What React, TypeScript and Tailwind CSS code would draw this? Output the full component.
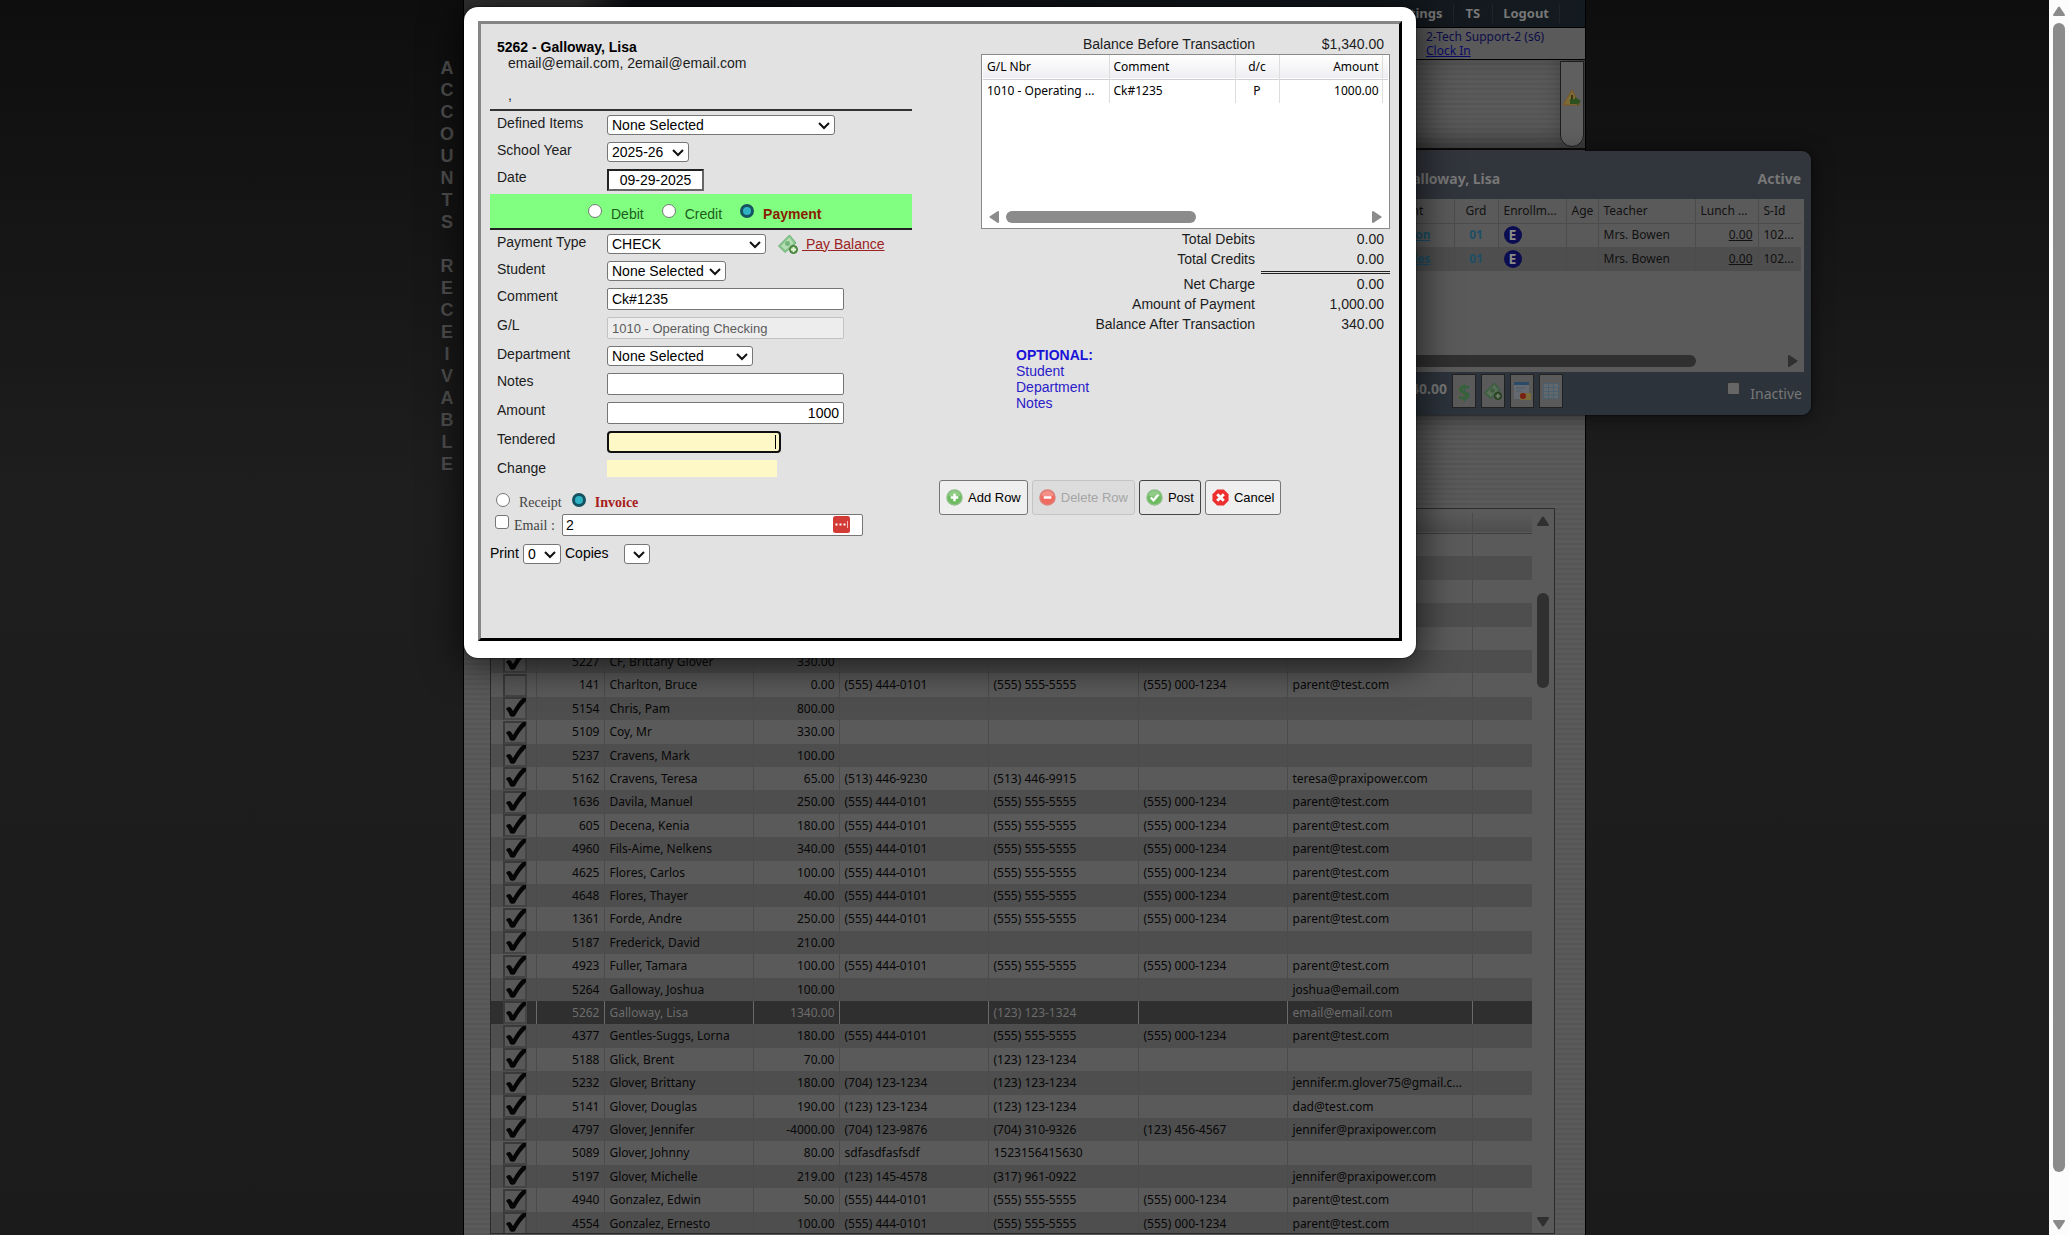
import React from 'react'
import clsx from 'clsx'

type Account = [id: string, name: string, balance: string, home: string, work: string, cell: string, email: string]

const HOME = '(555) 444-0101'
const WORK = '(555) 555-5555'
const CELL = '(555) 000-1234'
const MAIL = 'parent@test.com'

const accounts: Account[] = [
  ['5227', 'CF, Brittany Glover', '330.00', '', '', '', ''],
  ['141', 'Charlton, Bruce', '0.00', HOME, WORK, CELL, MAIL],
  ['5154', 'Chris, Pam', '800.00', '', '', '', ''],
  ['5109', 'Coy, Mr', '330.00', '', '', '', ''],
  ['5237', 'Cravens, Mark', '100.00', '', '', '', ''],
  ['5162', 'Cravens, Teresa', '65.00', '(513) 446-9230', '(513) 446-9915', '', 'teresa@praxipower.com'],
  ['1636', 'Davila, Manuel', '250.00', HOME, WORK, CELL, MAIL],
  ['605', 'Decena, Kenia', '180.00', HOME, WORK, CELL, MAIL],
  ['4960', 'Fils-Aime, Nelkens', '340.00', HOME, WORK, CELL, MAIL],
  ['4625', 'Flores, Carlos', '100.00', HOME, WORK, CELL, MAIL],
  ['4648', 'Flores, Thayer', '40.00', HOME, WORK, CELL, MAIL],
  ['1361', 'Forde, Andre', '250.00', HOME, WORK, CELL, MAIL],
  ['5187', 'Frederick, David', '210.00', '', '', '', ''],
  ['4923', 'Fuller, Tamara', '100.00', HOME, WORK, CELL, MAIL],
  ['5264', 'Galloway, Joshua', '100.00', '', '', '', 'joshua@email.com'],
  ['5262', 'Galloway, Lisa', '1340.00', '', '(123) 123-1324', '', 'email@email.com'],
  ['4377', 'Gentles-Suggs, Lorna', '180.00', HOME, WORK, CELL, MAIL],
  ['5188', 'Glick, Brent', '70.00', '', '(123) 123-1234', '', ''],
  ['5232', 'Glover, Brittany', '180.00', '(704) 123-1234', '(123) 123-1234', '', 'jennifer.m.glover75@gmail.c...'],
  ['5141', 'Glover, Douglas', '190.00', '(123) 123-1234', '(123) 123-1234', '', 'dad@test.com'],
  ['4797', 'Glover, Jennifer', '-4000.00', '(704) 123-9876', '(704) 310-9326', '(123) 456-4567', 'jennifer@praxipower.com'],
  ['5089', 'Glover, Johnny', '80.00', 'sdfasdfasfsdf', '1523156415630', '', ''],
  ['5197', 'Glover, Michelle', '219.00', '(123) 145-4578', '(317) 961-0922', '', 'jennifer@praxipower.com'],
  ['4940', 'Gonzalez, Edwin', '50.00', HOME, WORK, CELL, MAIL],
  ['4554', 'Gonzalez, Ernesto', '100.00', HOME, WORK, CELL, MAIL],
]

// rows scrolled under the dialog, only their stripes are visible
const blankRows: Account[] = Array.from({ length: 5 }, () => ['', '', '', '', '', '', ''])

const SELECTED_ID = '5262'

function Triangle({ className }: { className?: string }) {
  return (
    <svg viewBox="0 0 12 10" className={clsx('h-[10px] w-3', className)} fill="currentColor" stroke="currentColor" strokeWidth="2" strokeLinejoin="round">
      <path d="M6 1.5 11 9H1Z" />
    </svg>
  )
}

function MoneyIcon({ className }: { className?: string }) {
  return (
    <svg viewBox="0 0 20 20" className={className}>
      <path d="M.500 12 11.500 1 18 9 7 18.500Z" fill="#86c78c" stroke="#6fae76" />
      <path d="M3 12 11.500 3.500 15.500 9 7.500 16Z" fill="#b5deb4" />
      <circle cx="9.500" cy="9.500" r="2.500" fill="#74b67b" />
      <circle cx="15.500" cy="15.500" r="4" fill="#5c9a4e" stroke="#3f7536" />
      <path d="M15.500 13v5M13 15.500h5" stroke="#e9f7dc" strokeWidth="1.800" />
    </svg>
  )
}

function RoundIcon({ kind }: { kind: 'add' | 'delete' | 'post' | 'cancel' }) {
  if (kind === 'cancel') {
    return (
      <svg viewBox="0 0 18 18" className="size-[17px]">
        <path d="M5.500.5h7l5 5v7l-5 5h-7l-5-5v-7Z" fill="#ee2f2f" />
        <path d="m5.500 5.500 7 7m0-7-7 7" stroke="#fff" strokeWidth="3" />
      </svg>
    )
  }
  return (
    <svg viewBox="0 0 18 18" className="size-[17px]">
      <circle cx="9" cy="9" r="8" fill={kind === 'delete' ? '#ef6b60' : '#6cbb5f'} stroke={kind === 'delete' ? '#dd8078' : '#8fbf88'} strokeWidth="1.500" />
      <path d="M2.500 7a6.800 6.800 0 0 1 13 0c-4 2-9 2-13 0Z" fill="#fff" opacity=".25" />
      {kind === 'add' && <path d="M9 5v8M5 9h8" stroke="#fff" strokeWidth="2.600" />}
      {kind === 'delete' && <path d="M5 9h8" stroke="#fff" strokeWidth="2.600" />}
      {kind === 'post' && <path d="m5 9 3 3 5-6" stroke="#fff" strokeWidth="2.400" fill="none" />}
    </svg>
  )
}

/* ---------- form controls ---------- */

function SelectBox({ id, value, className, label }: { id: string; value: string; className: string; label?: string }) {
  return (
    <span className={clsx('relative block h-5', className)}>
      <select
        id={id}
        aria-label={label}
        defaultValue={value}
        className="block h-5 w-full appearance-none rounded-[3px] border border-[#767676] bg-white pl-1 text-[14px] leading-[18px] text-black"
      >
        <option value={value}>{value}</option>
      </select>
      <svg viewBox="0 0 12 8" className="pointer-events-none absolute top-[7px] right-[5px] h-2 w-3" fill="none" stroke="#111" strokeWidth="2">
        <path d="m1 1 5 5 5-5" />
      </svg>
    </span>
  )
}

function Field({ label, htmlFor, children }: { label: string; htmlFor: string; children: React.ReactNode }) {
  return (
    <div className="flex items-start pl-[7px]">
      <label htmlFor={htmlFor} className="w-[110px] shrink-0 leading-4">
        {label}
      </label>
      {children}
    </div>
  )
}

const inputClass = 'block h-[22px] w-[237px] rounded-[2px] border border-[#767676] bg-white px-1 text-[14px] text-black'
const radioClass =
  'size-[14px] shrink-0 appearance-none rounded-full border border-[#767676] bg-white checked:border-[3px] checked:border-[#14535f] checked:bg-[#2fb3c4]'

function Radio({ name, label, checked, className }: { name: string; label: string; checked?: boolean; className?: string }) {
  return (
    <label className="flex items-center gap-[9px]">
      <input type="radio" name={name} defaultChecked={checked} className={radioClass} />
      <span className={clsx('pt-[6px] leading-4', className)}>{label}</span>
    </label>
  )
}

function EntryForm() {
  return (
    <form className="w-[422px] shrink-0">
      <div className="h-[87px] border-b-2 border-[#333] pt-[15px] leading-4">
        <h2 className="pl-[7px] font-bold text-black">5262 - Galloway, Lisa</h2>
        <p className="pl-[18px]">email@email.com, 2email@email.com</p>
        <p className="pt-4 pl-[18px]">,</p>
      </div>

      <div className="flex flex-col gap-[7px] pt-1">
        <Field label="Defined Items" htmlFor="defined">
          <SelectBox id="defined" value="None Selected" className="w-[228px]" />
        </Field>
        <Field label="School Year" htmlFor="year">
          <SelectBox id="year" value="2025-26" className="w-[82px]" />
        </Field>
        <Field label="Date" htmlFor="date">
          <input id="date" defaultValue="09-29-2025" className="block h-[22px] w-[97px] border-2 border-t-[#222] border-r-[#666] border-b-[#666] border-l-[#222] bg-white text-center text-[14px] text-black" />
        </Field>
      </div>

      <fieldset className="mt-[3px] flex h-9 items-center gap-[18px] border-b-2 border-[#222] bg-[#80ff80] pl-[98px]">
        <Radio name="kind" label="Debit" className="text-[#1d5c1d]" />
        <Radio name="kind" label="Credit" className="text-[#1d5c1d]" />
        <Radio name="kind" label="Payment" checked className="font-bold text-[#8b1c00]" />
      </fieldset>

      <div className="flex flex-col gap-[7px] pt-1">
        <Field label="Payment Type" htmlFor="ptype">
          <SelectBox id="ptype" value="CHECK" className="w-[159px]" />
          <a href="#pay" className="ml-3 flex h-5 items-center gap-1 text-[#9b2222]">
            <MoneyIcon className="size-5" />
            <span className="whitespace-pre underline"> Pay Balance</span>
          </a>
        </Field>
        <Field label="Student" htmlFor="student">
          <SelectBox id="student" value="None Selected" className="w-[119px]" />
        </Field>
        <Field label="Comment" htmlFor="comment">
          <input id="comment" defaultValue="Ck#1235" className={inputClass} />
        </Field>
        <Field label="G/L" htmlFor="gl">
          <input id="gl" disabled defaultValue="1010 - Operating Checking" className="block h-[22px] w-[237px] rounded-[2px] border border-[#c2c2c2] bg-[#ededed] px-1 text-[13px] text-[#5c5c5c]" />
        </Field>
        <Field label="Department" htmlFor="dept">
          <SelectBox id="dept" value="None Selected" className="w-[146px]" />
        </Field>
        <Field label="Notes" htmlFor="notes">
          <input id="notes" className={inputClass} />
        </Field>
        <Field label="Amount" htmlFor="amount">
          <input id="amount" defaultValue="1000" className={clsx(inputClass, 'text-right')} />
        </Field>
        <Field label="Tendered" htmlFor="tendered">
          <span className="relative block">
            <input id="tendered" className="block h-[22px] w-[174px] rounded-[4px] border-2 border-[#101010] bg-[#fdf8c6]" />
            <span className="absolute top-1 right-[5px] h-[14px] w-px bg-black" />
          </span>
        </Field>
        <Field label="Change" htmlFor="change">
          <output id="change" className="block h-[17px] w-[170px] bg-[#fdf8c6]" />
        </Field>
      </div>

      <fieldset className="flex h-[37px] items-center gap-[10px] pt-2 pl-[6px] font-['Liberation_Serif',serif]">
        <Radio name="doc" label="Receipt" className="text-[#444]" />
        <Radio name="doc" label="Invoice" checked className="font-bold text-[#a81c1c]" />
      </fieldset>

      <div className="flex h-[22px] items-center pl-[5px]">
        <label className="flex w-[67px] items-center gap-[5px] font-['Liberation_Serif',serif] text-[#444]">
          <input type="checkbox" className="mb-[6px] size-[14px] shrink-0 appearance-none rounded-[3px] border border-[#767676] bg-white" />
          Email :
        </label>
        <span className="relative block">
          <input aria-label="Email address" defaultValue="2" className="block h-[22px] w-[301px] rounded-[2px] border border-[#767676] bg-white px-[3px] text-[14px] text-black" />
          <svg viewBox="0 0 17 17" className="absolute top-[2px] right-[13px] size-[17px]">
            <rect width="17" height="17" rx="2.500" fill="#d33c36" />
            <path d="M2.500 8.500h2M6.500 8.500h2M10.500 8.500h2" stroke="#fff" strokeWidth="2" />
            <path d="M14.500 5v7" stroke="#f3b9b6" />
          </svg>
        </span>
      </div>

      <div className="mt-[7px] flex items-center text-black">
        <label htmlFor="copies" className="w-[33px]">Print</label>
        <SelectBox id="copies" value="0" className="w-[38px]" />
        <span className="w-[63px] pl-1">Copies</span>
        <SelectBox id="printer" value=" " label="Printer" className="w-[26px]" />
      </div>
    </form>
  )
}

function TotalRow({ label, value, rule }: { label: string; value: string; rule?: boolean }) {
  return (
    <div className={clsx('flex justify-end', rule ? 'h-[25px]' : 'h-5')}>
      <span className="flex-1 pr-[6px] text-right leading-5">{label}</span>
      <span className={clsx('w-[129px] pr-[6px] text-right leading-5', rule && 'border-b-[3px] border-double border-[#222]')}>{value}</span>
    </div>
  )
}

function ActionButton({ kind, label, disabled, primary }: { kind: 'add' | 'delete' | 'post' | 'cancel'; label: string; disabled?: boolean; primary?: boolean }) {
  return (
    <button
      type="button"
      disabled={disabled}
      className={clsx(
        'flex h-[35px] items-center gap-[5px] rounded-[3px] border px-[6px] text-[13px]',
        disabled ? 'border-[#c4c4c4] bg-[#dcdcdc] text-[#a5a5a5]' : primary ? 'border-[#444] bg-[#e5e5e5] text-black' : 'border-[#767676] bg-[#efefef] text-black',
      )}
    >
      <RoundIcon kind={kind} />
      {label}
    </button>
  )
}

function Summary() {
  return (
    <section className="flex-1 pt-[10px]">
      <div className="pl-[42px]">
        <TotalRow label="Balance Before Transaction" value="$1,340.00" />
        <div className="flex h-[175px] flex-col justify-between border border-[#8a8a8a] bg-white px-px font-['Noto_Sans',sans-serif] text-[12px] text-black">
          <table className="w-full table-fixed">
            <colgroup>
              <col className="w-[126px]" />
              <col className="w-[126px]" />
              <col className="w-[44px]" />
              <col className="w-[103px]" />
              <col />
            </colgroup>
            <thead>
              <tr className="h-6 border-b border-[#cfcfd4] bg-linear-to-b from-white to-[#eeeef2]">
                <th className="border-r border-[#ddd] px-1 text-left font-normal">G/L Nbr</th>
                <th className="border-r border-[#ddd] px-1 text-left font-normal">Comment</th>
                <th className="border-r border-[#ddd] font-normal">d/c</th>
                <th className="border-r border-[#ddd] px-[3px] text-right font-normal">Amount</th>
                <th />
              </tr>
            </thead>
            <tbody>
              <tr className="h-6">
                <td className="border-r border-[#ddd] px-1">1010 - Operating ...</td>
                <td className="border-r border-[#ddd] px-1">Ck#1235</td>
                <td className="border-r border-[#ddd] text-center">P</td>
                <td className="border-r border-[#ddd] px-[3px] text-right">1000.00</td>
                <td />
              </tr>
            </tbody>
          </table>
          <div className="flex h-[22px] items-center gap-[6px] px-[5px] text-[#8b8b8b]">
            <Triangle className="-rotate-90" />
            <div className="flex-1">
              <div className="h-3 w-[53%] rounded-full bg-[#8b8b8b]" />
            </div>
            <Triangle className="rotate-90" />
          </div>
        </div>
        <TotalRow label="Total Debits" value="0.00" />
        <TotalRow label="Total Credits" value="0.00" rule />
        <TotalRow label="Net Charge" value="0.00" />
        <TotalRow label="Amount of Payment" value="1,000.00" />
        <TotalRow label="Balance After Transaction" value="340.00" />
      </div>

      <div className="mt-[13px] pl-[77px] leading-4 text-[#2a20c8]">
        <p className="font-bold text-[#1a12d8]">OPTIONAL:</p>
        <p>Student</p>
        <p>Department</p>
        <p>Notes</p>
      </div>

      <div className="mt-[69px] flex gap-1">
        <ActionButton kind="add" label="Add Row" />
        <ActionButton kind="delete" label="Delete Row" disabled />
        <ActionButton kind="post" label="Post" primary />
        <ActionButton kind="cancel" label="Cancel" />
      </div>
    </section>
  )
}

function TransactionDialog() {
  return (
    <div
      role="dialog"
      aria-label="Transaction"
      className="absolute top-[7px] left-px z-20 w-[952px] rounded-[14px] bg-white px-[14px] pt-[14px] pb-[17px] shadow-[0_0_2px_#000,0_4px_36px_6px_rgba(0,0,0,0.6)]"
    >
      <div className="flex gap-[27px] border-[3px] border-t-[#858585] border-r-black border-b-black border-l-[#858585] bg-[#e2e2e2] pr-[9px] pb-[74px] pl-[9px] font-['Liberation_Sans',Arial,sans-serif] text-[14px] text-[#1c1c1c]">
        <EntryForm />
        <Summary />
      </div>
    </div>
  )
}

/* ---------- family card, hangs off the right edge of the page ---------- */

const students = ['Jason', 'Myles']

function FamilyCard() {
  const cell = 'border-r border-[#4c4c4c] px-[5px]'
  return (
    <section className="absolute top-[151px] left-[904px] z-10 w-[444px] rounded-[9px] bg-linear-to-b from-[#32353c] to-[#2c333b] px-[7px] shadow-[0_0_2px_#000,0_2px_20px_rgba(0,0,0,0.5)]">
      <header className="flex h-12 items-center justify-between pt-[6px] pr-[3px] pl-7 text-[14px] font-bold text-[#777]">
        <span>Galloway, Lisa</span>
        <span>Active</span>
      </header>
      <div className="flex h-[173px] flex-col justify-between bg-[#5a5a5a] pr-[3px] text-[#111]">
        <table className="w-full table-fixed text-[12px]">
          <colgroup>
            <col className="w-[80px]" />
            <col className="w-[44px]" />
            <col className="w-[68px]" />
            <col className="w-[32px]" />
            <col className="w-[97px]" />
            <col className="w-[63px]" />
            <col />
          </colgroup>
          <thead>
            <tr className="h-6 border-b border-[#4c4c4c] text-left">
              <th className={clsx(cell, 'font-normal')}>Student</th>
              <th className={clsx(cell, 'text-center font-normal')}>Grd</th>
              <th className={clsx(cell, 'font-normal')}>Enrollm...</th>
              <th className={clsx(cell, 'font-normal')}>Age</th>
              <th className={clsx(cell, 'font-normal')}>Teacher</th>
              <th className={clsx(cell, 'font-normal')}>Lunch ...</th>
              <th className="px-[5px] font-normal">S-Id</th>
            </tr>
          </thead>
          <tbody>
            {students.map((name) => (
              <tr key={name} className="h-6 even:bg-[#4e4e4e]">
                <td className="border-r border-[#4c4c4c] pr-[23px] text-right">
                  <a href="#student" className="font-bold text-[#1b4f66] underline">{name}</a>
                </td>
                <td className={clsx(cell, 'text-center font-bold text-[#1b4f66]')}>01</td>
                <td className={cell}>
                  <span className="grid size-[18px] place-items-center rounded-full bg-[#0c0c50] text-[14px] leading-none font-bold text-[#8a8a8a]">E</span>
                </td>
                <td className={cell} />
                <td className={cell}>Mrs. Bowen</td>
                <td className={clsx(cell, 'text-right underline')}>0.00</td>
                <td className="px-[5px]">102...</td>
              </tr>
            ))}
          </tbody>
        </table>
        <div className="flex h-[22px] items-center pr-[2px] text-[#303030]">
          <div className="flex-1">
            <div className="h-3 w-[78%] rounded-full bg-[#303030]" />
          </div>
          <Triangle className="rotate-90" />
        </div>
      </div>
      <footer className="flex h-[43px] items-start gap-[5px] pt-[2px] text-[#777]">
        <span className="w-[73px] pt-1 text-right text-[14px] font-bold">340.00</span>
        <button type="button" aria-label="Charge" className="grid h-[34px] w-[24px] place-items-center border border-[#222] bg-[#5a5a5a] text-[22px] leading-none font-bold text-[#36633b]">$</button>
        <button type="button" aria-label="Payment" className="grid h-[34px] w-[24px] place-items-center border border-[#222] bg-[#5a5a5a]">
          <MoneyIcon className="size-[18px] brightness-50" />
        </button>
        <button type="button" aria-label="Statement" className="grid h-[34px] w-[24px] place-items-center border border-[#222] bg-[#5a5a5a]">
          <svg viewBox="0 0 18 20" className="h-5 w-[18px]">
            <path d="M1 1h15v17H1Z" fill="#656a70" />
            <path d="M1 1h15v3H1Z" fill="#2a4a68" />
            <path d="M3 7h9M3 10h5" stroke="#4a5a6a" />
            <path d="M7 12h11v7H7Z" fill="#7a6a3a" />
            <circle cx="10" cy="15" r="3" fill="#7a1f14" />
          </svg>
        </button>
        <button type="button" aria-label="Ledger" className="grid h-[34px] w-[24px] place-items-center border border-[#222] bg-[#5a5a5a]">
          <svg viewBox="0 0 18 18" className="size-[18px]" stroke="#4a6070" fill="#62686c">
            <path d="M1.500 1.500h15v15h-15ZM1.500 5.500h15M1.500 9.500h15M1.500 13h15M6.500 1.500v15M11.500 1.500v15" />
          </svg>
        </button>
        <label className="ml-auto flex items-center gap-[10px] pr-[2px] text-[14px]">
          <input type="checkbox" className="size-[13px] appearance-none rounded-[2px] border border-[#333] bg-[#666]" />
          <span className="pt-3 leading-4">Inactive</span>
        </label>
      </footer>
    </section>
  )
}

/* ---------- accounts list ---------- */

function RowCheck({ name, checked }: { name: string; checked: boolean }) {
  return (
    <span className="relative mr-[9px] ml-auto block h-[23px] w-6">
      <input type="checkbox" aria-label={name} defaultChecked={checked} className="block h-[23px] w-6 appearance-none border-2 border-t-[#3a3a3a] border-r-[#444] border-b-[#444] border-l-[#3a3a3a] bg-[#585858]" />
      {checked && (
        <svg viewBox="0 0 24 23" className="pointer-events-none absolute inset-0" fill="#050505">
          <path d="M3 12c1-2 4-3 5-1l2 3C13 9 16 4 20 1l3 0v3c-4 4-8 9-11 15-1 1-4 1-5 0-1-3-2-5-4-7Z" />
        </svg>
      )}
    </span>
  )
}

function AccountsTable() {
  return (
    <div className="mr-[30px] mb-px ml-[26px] flex min-h-0 flex-1 overflow-hidden border border-[#2b2b2b] bg-[#5a5a5a]">
      <div className="min-w-0 flex-1 overflow-hidden pt-1">
        <table className="w-full table-fixed text-[12px] text-[#070707]">
          <colgroup>
            <col className="w-[45px]" />
            <col className="w-[68px]" />
            <col className="w-[149px]" />
            <col className="w-[86px]" />
            <col className="w-[149px]" />
            <col className="w-[150px]" />
            <col className="w-[149px]" />
            <col className="w-[185px]" />
            <col />
          </colgroup>
          <thead>
            <tr className="h-5 border-b border-[#3c3c3c] bg-linear-to-b from-[#5a5a5a] to-[#4e4e4e]">
              <th colSpan={8} className="border-r border-[#4a4a4a]" />
              <th />
            </tr>
          </thead>
          <tbody>
            {[...blankRows, ...accounts].map((row, i) => {
              const [id, name, balance, ...rest] = row
              const selected = id === SELECTED_ID
              const cell = clsx('truncate border-r p-0', selected ? 'border-[#6a6a6a]' : 'border-[#4b4b4b]')
              return (
                <tr
                  key={i}
                  className={clsx(
                    'leading-5',
                    i % 5 === 1 || i % 5 === 3 ? 'h-6' : 'h-[23px]',
                    selected ? 'bg-[#2f2f2f] text-[#6c6c6c]' : i % 2 ? 'bg-[#4e4e4e]' : 'bg-[#5a5a5a]',
                  )}
                >
                  <td className={cell}>{name && <RowCheck name={name} checked={id !== '141'} />}</td>
                  <td className={clsx(cell, 'pr-1 text-right')}>{id}</td>
                  <td className={clsx(cell, 'pl-[5px]')}>{name}</td>
                  <td className={clsx(cell, 'pr-1 text-right')}>{balance}</td>
                  {rest.map((text, j) => (
                    <td key={j} className={clsx(cell, 'pl-[5px]')}>{text}</td>
                  ))}
                  <td />
                </tr>
              )
            })}
          </tbody>
        </table>
      </div>
      <div className="flex w-[22px] flex-col items-center pt-[7px] pb-[6px] text-[#303030]">
        <Triangle />
        <div className="flex-1 pt-[67px]">
          <div className="h-[95px] w-3 rounded-full bg-[#303030]" />
        </div>
        <Triangle className="rotate-180" />
      </div>
    </div>
  )
}

function PageTop() {
  return (
    <div className="h-[150px] border-b-2 border-[#0c0c0c]">
      <nav className="flex h-7 items-center justify-end border-b border-black bg-linear-to-r from-[#333] from-10% via-[#0c0d12] via-15% to-[#141b20] pr-[25px] text-[13px] font-bold text-[#777]">
        <a href="#settings" className="border-r border-[#1d252a] px-[10px]">Settings</a>
        <a href="#ts" className="border-r border-[#1d252a] px-3">TS</a>
        <a href="#logout" className="border-r border-[#1d252a] px-[10px]">Logout</a>
      </nav>
      <div className="flex h-8 justify-end border-b border-black bg-[#5a5a5a] text-[12px] leading-[14px] text-[#0c0c48]">
        <p className="w-[159px] pt-[2px]">
          2-Tech Support-2 (s6)
          <br />
          <a href="#clock" className="text-[#0a0a68] underline">Clock In</a>
        </p>
      </div>
      <div className="flex h-[88px] justify-end bg-[repeating-linear-gradient(180deg,#5a5a5a_0_3px,#555555_3px_5px)] pt-px pr-px shadow-[inset_-20px_-6px_24px_rgba(0,0,0,0.35)]">
        <button type="button" aria-label="Alerts" className="grid h-[86px] w-[24px] place-items-center rounded-b-full border border-[#1c1c1c] bg-[#5f5f5f] pb-3">
          <svg viewBox="0 0 20 18" className="h-[18px] w-5">
            <path d="M10 1 18 16H1Z" fill="#7d6c36" stroke="#7c5526" strokeLinejoin="round" />
            <path d="M10 6v5" stroke="#3a3314" strokeWidth="2" />
            <path d="M13 8 19 12l-4 5v-2H8v-5h5Z" fill="#2d5220" />
          </svg>
        </button>
      </div>
    </div>
  )
}

export default function App() {
  return (
    <div className="flex h-screen overflow-hidden bg-linear-to-b from-[#0e0e0e] via-[#1e1e1e] via-40% to-[#1b1b1b] font-['Noto_Sans',sans-serif]">
      <main className="min-w-0 flex-1">
        <div className="relative mx-auto h-full w-[1123px] max-w-full">
          <h1
            aria-label="Accounts Receivable"
            className="absolute top-[57px] right-full mr-[6px] w-5 text-center font-['Liberation_Sans',Arial,sans-serif] text-[18px] leading-[22px] font-bold text-[#505050]"
          >
            {'ACCOUNTS RECEIVABLE'.split('').map((ch, i) => (
              <span key={i} className="block h-[22px]">{ch}</span>
            ))}
          </h1>
          <div className="flex h-full flex-col border-x border-black bg-[repeating-linear-gradient(180deg,#5a5a5a_0_3px,#555555_3px_5px)]">
            <PageTop />
            <div className="h-[358px] shrink-0" />
            <AccountsTable />
          </div>
          <FamilyCard />
          <TransactionDialog />
        </div>
      </main>
      <div className="flex w-5 shrink-0 flex-col items-center bg-[#fcfcfc] pt-[6px] pb-[5px] text-[#8b8b8b]">
        <Triangle />
        <div className="flex-1 pt-[7px]">
          <div className="h-[96%] w-3 rounded-full bg-[#8b8b8b]" />
        </div>
        <Triangle className="rotate-180" />
      </div>
    </div>
  )
}
